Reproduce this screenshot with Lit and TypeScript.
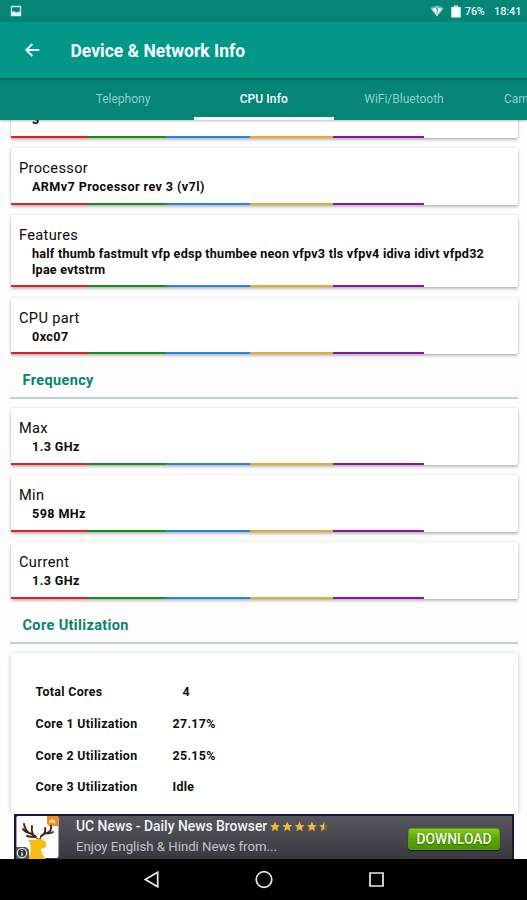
import { LitElement, html, css, svg } from "lit";
import { customElement, property } from "lit/decorators.js";

@customElement("info-card")
class InfoCard extends LitElement {
  @property() label = "";
  @property() value = "";

  static styles = css`
    :host {
      display: flex;
      flex-direction: column;
      box-sizing: border-box;
      background: #fefefe;
      border-radius: 2px;
      box-shadow: 0 2px 3px rgba(0, 0, 0, 0.24), 0 0 3px rgba(0, 0, 0, 0.12);
      padding-top: 11px;
      color: #0b0b0b;
    }
    .label {
      font-size: 14.6px;
      line-height: 19px;
      min-height: 19px;
      letter-spacing: 0.34px;
      padding-left: 8px;
    }
    .value {
      font-size: 12.6px;
      line-height: 16px;
      font-weight: 700;
      letter-spacing: var(--tracking, 0.4px);
      padding: 1px 20px 0 21px;
      flex: 1;
    }
    .stripe {
      display: grid;
      grid-template-columns: 76.5px 78.5px 84px 83px 91px 1fr;
      height: 2px;
    }
    .red { background: #dc2226; }
    .green { background: #178c1f; }
    .blue { background: #2585df; }
    .amber { background: #e5aa31; }
    .purple { background: #8c16a4; }
  `;

  render() {
    return html`
      <div class="label">${this.label}</div>
      <div class="value">${this.value}</div>
      <div class="stripe">
        <i class="red"></i><i class="green"></i><i class="blue"></i><i class="amber"></i><i class="purple"></i>
      </div>
    `;
  }
}

const STAR = "M5 0.1 6.5 3.4 10 3.7 7.3 6.1 8.2 9.8 5 7.8 1.8 9.8 2.7 6.1 0 3.7 3.5 3.4Z";

@customElement("app-root")
class AppRoot extends LitElement {
  static styles = css`
    :host {
      display: flex;
      flex-direction: column;
      width: 527px;
      height: 900px;
      overflow: hidden;
      background: #fdfdfd;
      font-family: Roboto, "Liberation Sans", sans-serif;
    }
    svg { display: block; flex: none; }
    .status {
      height: 22px;
      flex: none;
      background: #048576;
      color: #e4f6f3;
      display: flex;
      align-items: center;
      padding: 0 7px 0 10px;
      font-size: 11px;
      font-weight: 500;
    }
    .status .grow { flex: 1; }
    .battery { margin: 0 4px 0 7px; }
    .percent { width: 29px; letter-spacing: -0.2px; font-size: 10.8px; }
    .time { letter-spacing: -0.1px; width: 26px; white-space: nowrap; }
    .appbar {
      height: 56px;
      flex: none;
      background: #039788;
      display: flex;
      align-items: center;
      padding-left: 24px;
      color: #f5fffd;
      position: relative;
      z-index: 3;
      box-shadow: 0 1px 2px rgba(0, 40, 36, 0.5);
    }
    .title {
      font-size: 17.5px;
      font-weight: 700;
      margin-left: 29.5px;
      padding-top: 1px;
    }
    .tabs {
      height: 42px;
      flex: none;
      background: #048576;
      display: grid;
      grid-template-columns: 52.5px 141px 140.5px 140px 140px;
      line-height: 43px;
      font-size: 12px;
      text-align: center;
      color: #97cdc6;
      position: relative;
      z-index: 2;
      box-shadow: 0 1px 2px rgba(0, 0, 0, 0.25);
      overflow: hidden;
    }
    .tab { box-sizing: border-box; height: 42px; white-space: nowrap; }
    .active {
      color: #fff;
      font-weight: 500;
      letter-spacing: 0.1px;
      border-bottom: 3px solid #fafafa;
    }
    .last { text-align: left; padding-left: 30px; }
    .content {
      flex: 1;
      min-height: 0;
      overflow: hidden;
      padding: 0 9px 0 11px;
      display: flex;
      flex-direction: column;
    }
    .card { flex: none; height: 57px; margin-bottom: 10px; }
    .clipped { margin-top: -39px; }
    .tall { height: 72px; --tracking: 0.23px; }
    .short { height: 56px; margin-top: 1px; }
    .before-section { margin-bottom: 0; }
    .section {
      flex: none;
      height: 45px;
      box-sizing: border-box;
      margin: 0 0 9px -1px;
      padding: 17px 0 0 12.5px;
      border-bottom: 2px solid #b8d6cf;
      color: #0b8270;
      font-size: 14.5px;
      line-height: 20px;
      font-weight: 700;
      letter-spacing: 0.37px;
    }
    .cores {
      flex: none;
      height: 230px;
      box-sizing: border-box;
      padding: 23px 0 0 24.5px;
      background: #fefefe;
      border-radius: 2px;
      box-shadow: 0 1px 4px rgba(0, 0, 0, 0.22);
      display: grid;
      grid-template-columns: 137px 60px;
      grid-auto-rows: 31.8px;
      line-height: 31.8px;
      font-size: 12.4px;
      font-weight: 700;
      letter-spacing: 0.33px;
      color: #0e0e0e;
    }
    .total { padding-left: 10px; }
    .ad {
      height: 45px;
      flex: none;
      box-sizing: border-box;
      margin: 0 13px 0 14px;
      border: 1px solid #17173b;
      border-width: 2px 2px 0 2px;
      background: linear-gradient(#56565f, #38383e);
      display: flex;
      color: #f2f2f5;
    }
    .copy { margin-left: 17px; width: 332px; white-space: nowrap; }
    .headline {
      display: flex;
      align-items: center;
      height: 20px;
      font-size: 13.9px;
      font-weight: 500;
    }
    .stars { margin-left: 3px; }
    .sub { font-size: 13.2px; line-height: 21px; color: #c3c3ca; }
    .download {
      box-sizing: border-box;
      width: 92px;
      height: 22px;
      margin-top: 12px;
      border-radius: 3px;
      background: linear-gradient(#86c91d, #5ba506 50%, #4b9503);
      border: 1px solid #5a9a16;
      box-shadow: 0 1px 1px #17191a;
      font-size: 13.8px;
      line-height: 20px;
      font-weight: 500;
      text-align: center;
      color: #f6ffe9;
      text-shadow: 0 1px 1px #2c5a00;
    }
    .nav {
      height: 41px;
      flex: none;
      background: #000;
    }
  `;

  private star(i: number) {
    return svg`<path d=${STAR} transform="translate(${i * 12.3} 0.5)" fill=${i === 4 ? "#77643f" : "#f6b63c"} />`;
  }

  render() {
    return html`
      <div class="status">
        <svg width="12" height="12" viewBox="0 0 12 12">
          <path d="M1.5 1.5H10.5V10.5H1.5Z" fill="none" stroke="#d4efeb" stroke-width="1.3" />
          <path d="M2 10V7.4L4 6 6 7.7 8.8 6.4 10 7.5V10Z" fill="#e8f8f5" />
        </svg>
        <span class="grow"></span>
        <svg width="14" height="12" viewBox="0 0 14 12">
          <path d="M0 3.2Q7 -2.2 14 3.2L7 11.8Z" fill="#5eb4a9" />
          <path d="M2 4Q7 0.8 12 4L7 11Z" fill="#f2fffc" />
          <path d="M5.8 4.2Q7 3 8 4.2Q8.2 5.2 7 5.9V7M7 8V9" fill="none" stroke="#048576" stroke-width="1" />
        </svg>
        <svg class="battery" width="10" height="13" viewBox="0 0 10 13">
          <path d="M3 0.5H7V2H9.7V12.5H0.3V2H3Z" fill="#f4fffd" />
        </svg>
        <span class="percent">76%</span>
        <span class="time">18:41</span>
      </div>
      <div class="appbar">
        <svg width="17" height="16" viewBox="0 0 17 16">
          <path d="M15.3 8H2.8M8.4 1.9L2.3 8L8.4 14.1" fill="none" stroke="#effffc" stroke-width="2" />
        </svg>
        <div class="title">Device &amp; Network Info</div>
      </div>
      <div class="tabs">
        <div></div>
        <div class="tab">Telephony</div>
        <div class="tab active">CPU Info</div>
        <div class="tab">WiFi/Bluetooth</div>
        <div class="tab last">Camera</div>
      </div>
      <div class="content">
        <info-card class="card clipped" value="3"></info-card>
        <info-card class="card" label="Processor" value="ARMv7 Processor rev 3 (v7l)"></info-card>
        <info-card
          class="card tall"
          label="Features"
          value="half thumb fastmult vfp edsp thumbee neon vfpv3 tls vfpv4 idiva idivt vfpd32 lpae evtstrm"
        ></info-card>
        <info-card class="card short before-section" label="CPU part" value="0xc07"></info-card>
        <div class="section">Frequency</div>
        <info-card class="card" label="Max" value="1.3 GHz"></info-card>
        <info-card class="card" label="Min" value="598 MHz"></info-card>
        <info-card class="card before-section" label="Current" value="1.3 GHz"></info-card>
        <div class="section">Core Utilization</div>
        <div class="cores">
          <span>Total Cores</span><span class="total">4</span>
          <span>Core 1 Utilization</span><span>27.17%</span>
          <span>Core 2 Utilization</span><span>25.15%</span>
          <span>Core 3 Utilization</span><span>Idle</span>
        </div>
      </div>
      <div class="ad">
        <svg width="43" height="43" viewBox="0 0 43 43">
          <rect x="0.5" y="0" width="42" height="42" rx="2" fill="#fdfdfd" />
          <path d="M31 0H40.5Q42.5 0 42.5 2V10H35Q31 10 31 6Z" fill="#f28b17" />
          <path d="M34 7V4M36 7V3.5L38.5 7V4" fill="none" stroke="#fff3d8" stroke-width="1.1" />
          <path d="M12 43Q16 35 14 27L12 24L20 24L23 20L25 23L30 26L30 31L25 33Q25 38 30 43Z" fill="#f7bd10" />
          <path d="M21 22Q18 18 13 17Q9 14 8 8M13 17Q10 17 7 13M17 19Q15 14 16 10M24 22Q26 18 31 17Q36 15 35 10M31 17Q34 18 37 16M27 19Q30 16 29 12M20 21Q14 21 11 20" fill="none" stroke="#46201a" stroke-width="1.9" stroke-linecap="round" />
          <path d="M22 16L24.5 22H20.5Z" fill="#fff" />
          <path d="M0 31H10L13 34V43H0Z" fill="#50545a" />
          <circle cx="6" cy="37" r="4.7" fill="#34383d" stroke="#d9dcdf" stroke-width="1.3" />
          <path d="M6 34V35.2M6 36.4V40" stroke="#e3e3e3" stroke-width="1.5" />
        </svg>
        <div class="copy">
          <div class="headline">
            <span>UC News - Daily News Browser</span>
            <svg class="stars" width="60" height="11" viewBox="0 0 60 11">
              ${[0, 1, 2, 3, 4].map((i) => this.star(i))}
              <path d="M5 0.1V7.8L1.8 9.8 2.7 6.1 0 3.7 3.5 3.4Z" transform="translate(49.2 0.5)" fill="#f6b63c" />
            </svg>
          </div>
          <div class="sub">Enjoy English &amp; Hindi News from...</div>
        </div>
        <div class="download">DOWNLOAD</div>
      </div>
      <div class="nav">
        <svg width="527" height="41" viewBox="0 0 527 41" fill="none" stroke="#e8e8e8" stroke-width="1.7">
          <path d="M157.7 13.3V27.7L145.3 20.5Z" />
          <circle cx="264" cy="20.5" r="7.8" />
          <path d="M370 14H383V27H370Z" />
        </svg>
      </div>
    `;
  }
}
